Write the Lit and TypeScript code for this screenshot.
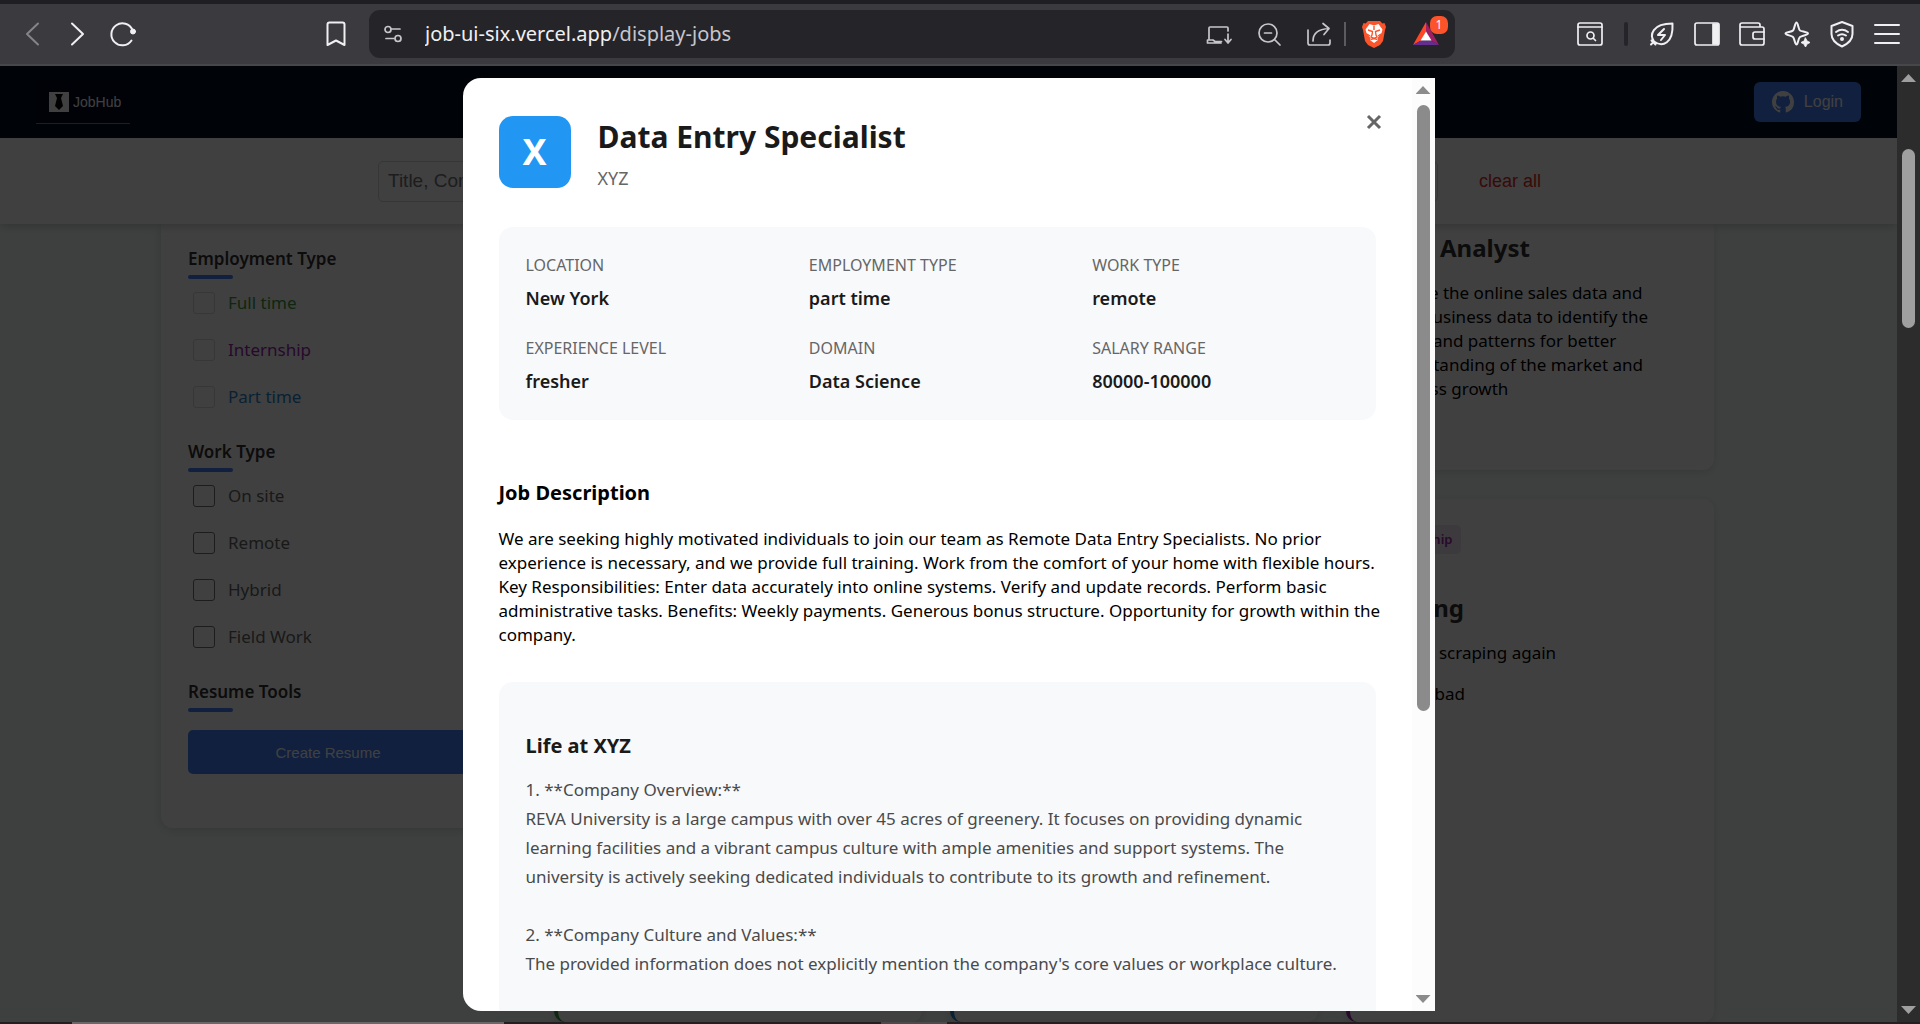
import { LitElement, html, css, svg } from "lit";
import { customElement, property } from "lit/decorators.js";

const stroke = (body: unknown, cls = "") => html`
  <svg class="icon ${cls}" viewBox="0 0 28 28" width="28" height="28" fill="none" stroke="currentColor"
    stroke-width="2" stroke-linecap="round" stroke-linejoin="round" aria-hidden="true">${body}</svg>`;

const icons = {
  back: stroke(svg`<path d="M19 3.500 8 14l11 10.500"/>`),
  forward: stroke(svg`<path d="M8 3.500 19 14 8 24.500"/>`),
  reload: stroke(svg`<path d="M23.500 10A11 11 0 1 0 22.500 20.500"/><circle cx="24" cy="11.500" r="2.500" fill="currentColor" stroke-width="1"/>`),
  bookmark: stroke(svg`<path d="M5.500 4.500a2 2 0 0 1 2-2h13a2 2 0 0 1 2 2v20.500l-8.500-4.500-8.500 4.500z"/>`),
  site: stroke(svg`<circle cx="9" cy="9.500" r="3"/><path d="M12 9h9M7 18.500h8"/><circle cx="19" cy="18.500" r="3"/>`, "thin"),
  install: stroke(svg`<path d="M4 19V8a1 1 0 0 1 1-1h17a1 1 0 0 1 1 1v3M2.500 20h5.500l2 1.500h6.500M2.500 20v3h13.500M23 14v8M20 19.500l3 3.500 3-3.500"/>`, "thin"),
  zoomOut: stroke(svg`<circle cx="13" cy="13" r="9"/><path d="M9.500 13h7M19.500 19.500l5.500 5.500"/>`, "thin"),
  share: stroke(svg`<path d="M3 10v13a2 2 0 0 0 2 2h18a2 2 0 0 0 2-2v-3M8 21c0-8 6-12 16-12.500M18 3.500l6 5-5 6"/>`, "thin"),
  find: stroke(svg`<rect x="2" y="3" width="24" height="22" rx="2"/><path d="M2 7h24M17.500 18.500l2 2"/><circle cx="14.500" cy="15.500" r="3.500"/>`, "thin"),
  leaf: stroke(svg`<path d="M3 24.500c1-1 2-2 3-3C1.500 15 4 3.500 24.500 3.500c1 20-10 24-18.500 18M3.500 20.500l4 4M16 9l-6 6h7l-4 5"/>`),
  panel: stroke(svg`<rect x="2" y="3" width="24" height="22" rx="2"/><path d="M20 4v20h5V4z" fill="currentColor"/>`, "thin"),
  wallet: stroke(svg`<path d="M22 7V5a2 2 0 0 0-2-2H4a2 2 0 0 0-2 2v18a2 2 0 0 0 2 2h20a2 2 0 0 0 2-2V9a2 2 0 0 0-2-2H3"/><path d="M26 12h-9a2 2 0 0 0-2 2v3a2 2 0 0 0 2 2h9"/>`, "thin"),
  sparkle: stroke(svg`<path d="M13.500 2.500c1.500 0 2 7 3.500 8s8 1.500 8 3-6 2-8 3.500-2 7.500-3.500 7.500-2-6-3.500-7.500-7.500-2-7.500-3.500 6-1.500 7.500-3 2-8 3.500-8z"/><path d="M22.500 18l1.500 3 3 1.500-3 1.500-1.500 3-1.500-3-3-1.500 3-1.500z" fill="currentColor" stroke-width="1"/>`),
  shield: stroke(svg`<path d="M14 2l10.500 4v8c0 6-5 10-10.500 12.500C8.500 24 3.500 20 3.500 14V6z"/><path d="M8 12c4-3 8-3 12 0M10 15.500c3-2 5-2 8 0"/><circle cx="14" cy="19" r="1" fill="currentColor"/>`),
  menu: stroke(svg`<path d="M2 5h24M2 14h24M2 23h24"/>`),
  close: stroke(svg`<path d="M8 8l12 12M20 8 8 20" stroke-width="3" stroke-linecap="butt"/>`),
};

const braveIcon = html`
  <svg viewBox="0 0 28 30" width="28" height="30" aria-hidden="true">
    <path fill="#fb542b" d="M8 2h12l2.500 2.500 2-.5L26 8l-1 3-2 11-3 4-6 3-6-3-3-4L3 11 2 8l1.500-4 2 .5z"/>
    <path fill="#fff" d="M14 6.500 18.500 5l4 5.500-1 3.500-4 5 .5 2-4 3-4-3 .5-2-4-5-1-3.500L9.500 5z"/>
    <path fill="none" stroke="#fb542b" stroke-width="1.400" d="M8 11l4.500 1.500L12 16l-1 2 3 1.500 3-1.500-1-2-.5-3.500L20 11M10.500 20.500 14 19.500l3.500 1M14 7v4M7 15l3 2M21 15l-3 2"/>
  </svg>`;

const tokenIcon = html`
  <svg viewBox="0 0 28 26" width="28" height="26" aria-hidden="true">
    <path fill="#ff4724" d="M14 1v10l-5 8.500-8 4.500z"/>
    <path fill="#9e1f63" d="M14 1v10l5 8.500 8 4.500z"/>
    <path fill="#662d91" d="M1 24l8-4.500h10l8 4.500z"/>
    <path fill="#fff" d="M14 10.500l5.500 9h-11z"/>
  </svg>`;

const githubIcon = html`
  <svg viewBox="0 0 16 16" width="22" height="22" fill="currentColor" aria-hidden="true">
    <path d="M8 0C3.580 0 0 3.580 0 8c0 3.540 2.290 6.530 5.470 7.590.4.070.55-.17.55-.38 0-.19-.01-.82-.01-1.490-2.010.37-2.530-.49-2.690-.94-.09-.23-.48-.94-.82-1.130-.28-.15-.68-.52-.01-.53.63-.01 1.080.58 1.230.82.72 1.210 1.870.87 2.330.66.07-.52.28-.87.51-1.070-1.780-.2-3.640-.89-3.640-3.950 0-.87.31-1.590.82-2.150-.08-.2-.36-1.020.08-2.120 0 0 .67-.21 2.200.82a7.600 7.600 0 0 1 4 0c1.530-1.040 2.200-.82 2.200-.82.44 1.100.16 1.920.08 2.120.51.56.82 1.270.82 2.150 0 3.070-1.870 3.750-3.650 3.950.29.25.54.73.54 1.480 0 1.070-.01 1.930-.01 2.200 0 .21.15.46.55.38A8.010 8.010 0 0 0 16 8c0-4.420-3.580-8-8-8z"/>
  </svg>`;

const tieIcon = html`
  <svg viewBox="0 0 20 20" width="20" height="20" aria-hidden="true">
    <rect width="20" height="20" fill="#fff"/>
    <path d="M6 2h8l-2 4 2 8-4 4-4-4 2-8z" fill="#000"/>
  </svg>`;

const reset = css`
  * { box-sizing: border-box; margin: 0; padding: 0; }
  button { border: 0; background: none; color: inherit; font: inherit; cursor: pointer; }
  a { color: inherit; text-decoration: none; }
  .icon { display: block; flex: none; }
  .icon.thin { stroke-width: 1.700; }
`;

@customElement("browser-bar")
class BrowserBar extends LitElement {
  static styles = [reset, css`
    :host { display: block; font-family: "Noto Sans", "Open Sans", sans-serif; }
    .bar {
      display: flex; align-items: center; height: 66px; padding: 0 11px 0 10px;
      background: #3b3a3f; color: #f0f0f3; border-top: 4px solid #1f1e23; border-bottom: 2px solid #47474b;
    }
    .tool { display: flex; align-items: center; justify-content: center; flex: none; width: 45px; height: 44px; }
    .off { color: #858489; }
    .mark { margin-left: 168px; margin-right: 11px; }
    .address {
      display: flex; align-items: center; flex: 0 1 1086px; min-width: 0; height: 48px;
      padding: 0 3px 0 10px; border-radius: 11px; background: #252429; color: #c6c6cb;
    }
    .address .tool { width: 50px; }
    .address .site { width: 28px; }
    .address .brand { width: 52px; }
    .url {
      flex: 1; min-width: 0; height: 32px; margin-left: 18px; overflow: hidden; white-space: nowrap;
      font-size: 20px; line-height: 32px;
    }
    .host { color: #f0f0f3; }
    .rule { flex: none; width: 2px; height: 24px; margin-right: 2px; background: #5c5b60; }
    .badge-wrap { position: relative; }
    .count {
      position: absolute; top: 4px; right: 4px; min-width: 18px; height: 18px; border-radius: 7px;
      background: #fb542b; color: #fff; font-size: 12px; line-height: 18px; text-align: center;
    }
    .end { display: flex; align-items: center; margin-left: auto; }
    .gap { display: flex; justify-content: center; width: 27px; }
    .gap i { width: 4px; height: 24px; border-radius: 2px; background: #25242a; }
  `];

  render() {
    const tool = (label: string, icon: unknown, cls = "") =>
      html`<button class="tool ${cls}" aria-label=${label}>${icon}</button>`;
    return html`
      <div class="bar">
        ${tool("Back", icons.back, "off")}${tool("Forward", icons.forward)}${tool("Reload", icons.reload)}
        ${tool("Bookmark", icons.bookmark, "mark")}
        <div class="address">
          ${tool("Site settings", icons.site, "site")}
          <p class="url"><span class="host">job-ui-six.vercel.app</span>/display-jobs</p>
          ${tool("Install", icons.install)}${tool("Zoom", icons.zoomOut)}${tool("Share", icons.share)}
          <span class="rule"></span>
          ${tool("Shields", braveIcon, "brand")}
          <button class="tool brand badge-wrap" aria-label="Rewards">${tokenIcon}<span class="count">1</span></button>
        </div>
        <div class="end">
          ${tool("Find", icons.find)}<span class="gap"><i></i></span>
          ${tool("Energy saver", icons.leaf)}${tool("Side panel", icons.panel)}${tool("Wallet", icons.wallet)}
          ${tool("Assistant", icons.sparkle)}${tool("VPN", icons.shield)}${tool("Menu", icons.menu)}
        </div>
      </div>`;
  }
}

@customElement("scroll-track")
class ScrollTrack extends LitElement {
  @property({ type: Number }) before = 0;
  @property({ type: Number }) thumb = 50;
  @property({ type: Number }) after = 50;
  static styles = css`
    :host { display: flex; flex: none; width: 23px; }
    .track { display: flex; flex-direction: column; align-items: center; flex: 1; padding: 8px 0; }
    .arrow { flex: none; width: 15px; height: 8px; background: currentColor; clip-path: polygon(50% 0, 100% 100%, 0 100%); }
    .down { clip-path: polygon(0 0, 100% 0, 50% 100%); }
    .lane { display: flex; flex-direction: column; flex: 1; width: 13px; padding: 11px 0; }
    .thumb { border-radius: 7px; background: currentColor; }
  `;
  render() {
    return html`
      <div class="track">
        <span class="arrow"></span>
        <span class="lane">
          <span style="flex:${this.before}"></span>
          <span class="thumb" style="flex:${this.thumb}"></span>
          <span style="flex:${this.after}"></span>
        </span>
        <span class="arrow down"></span>
      </div>`;
  }
}

const employment = [["Full time", "green"], ["Internship", "purple"], ["Part time", "blue"]];
const workTypes = ["On site", "Remote", "Hybrid", "Field Work"];

@customElement("job-board")
class JobBoard extends LitElement {
  static styles = [reset, css`
    :host { display: flex; flex-direction: column; min-height: 0; overflow: hidden; background: #f5fffa; font-family: "Noto Sans", "Open Sans", sans-serif; font-size: 17px; line-height: 24px; }
    .nav { display: flex; align-items: center; justify-content: space-between; flex: none; height: 72px; padding: 0 36px; background: #001020; color: #fff; font-family: "Liberation Sans", Arial, sans-serif; }
    .logo { display: flex; align-items: center; gap: 4px; height: 44px; padding: 0 9px 0 13px; background: #000820; border-bottom: 1px solid #777; font-size: 14px; }
    .login { display: flex; align-items: center; gap: 10px; height: 40px; padding: 0 18px; border-radius: 6px; background: #4480fc; font-size: 16px; }
    .filters { display: flex; align-items: center; justify-content: center; flex: none; z-index: 1; height: 86px; padding-left: 22px; background: #fff; box-shadow: 0 2px 9px rgba(0, 0, 0, .2); font-family: "Liberation Sans", Arial, sans-serif; }
    .field { width: 520px; height: 41px; padding: 0 9px; border: 1px solid #d5d5d5; border-radius: 5px; font: 19px "Liberation Sans", Arial, sans-serif; }
    .field::placeholder { color: #757575; opacity: 1; }
    .field + .field { margin-left: 20px; }
    .clear { margin-left: 41px; color: #e02b20; font-size: 18px; }
    .main { display: flex; align-items: flex-start; flex: 1; min-height: 0; padding: 0 183px 0 161px; }
    .side { flex: none; width: 334px; padding: 23px 27px 54px; border-radius: 0 0 12px 12px; background: #fff; box-shadow: 0 2px 11px rgba(0, 0, 0, .15); }
    .head { font-size: 17px; font-weight: 600; line-height: 24px; color: #333; }
    .head::after { content: ""; display: block; width: 45px; height: 4px; margin-top: 4px; border-radius: 2px; background: #4480fc; }
    .group { margin-bottom: 20px; }
    .opt { display: flex; align-items: center; gap: 13px; height: 47px; padding-left: 5px; color: #666; }
    .opt input { appearance: none; flex: none; width: 22px; height: 22px; border: 1px solid #767676; border-radius: 3px; background: #fff; }
    .opt.green input, .opt.purple input, .opt.blue input { border-color: #dadada; }
    .green { color: #3c9a40; } .purple { color: #9c27b0; } .blue { color: #2a84d0; }
    .create { display: block; width: 100%; height: 44px; margin-top: 18px; border-radius: 5px; background: #4480fc; color: #fff; font: 15px "Liberation Sans", Arial, sans-serif; }
    .cards { display: grid; grid-template-columns: repeat(3, 1fr); grid-template-rows: 246px 523px; gap: 29px 28px; flex: 1; margin-left: 59px; }
    .card { padding: 26px 27px 0; border-left: 4px solid; border-radius: 11px; background: #fff; box-shadow: 0 2px 9px rgba(0, 0, 0, .12); }
    .top { padding-top: 6px; border-radius: 0 0 11px 11px; }
    .title { font-size: 24px; line-height: 36px; color: #333; }
    .text { margin-top: 15px; color: #000; }
    .place { margin-top: 17px; color: #000; }
    .tag { display: inline-block; margin-bottom: 36px; padding: 4px 9px; border-radius: 5px; background: #f3e5f5; color: #9c27b0; font-size: 13px; font-weight: 600; line-height: 21px; vertical-align: top; }
  `];

  render() {
    return html`
      <header class="nav">
        <a class="logo" href="#">${tieIcon}<span>JobHub</span></a>
        <button class="login">${githubIcon}<span>Login</span></button>
      </header>
      <form class="filters">
        <input class="field" aria-label="Title or company" placeholder="Title, Company">
        <input class="field" aria-label="Location">
        <button class="clear" type="reset">clear all</button>
      </form>
      <div class="main">
        <aside class="side">
          <section class="group">
            <h3 class="head">Employment Type</h3>
            ${employment.map(([name, tone]) => html`<label class="opt ${tone}"><input type="checkbox">${name}</label>`)}
          </section>
          <section class="group">
            <h3 class="head">Work Type</h3>
            ${workTypes.map((name) => html`<label class="opt"><input type="checkbox">${name}</label>`)}
          </section>
          <h3 class="head">Resume Tools</h3>
          <button class="create">Create Resume</button>
        </aside>
        <div class="cards">
          <article class="card top green"></article>
          <article class="card top blue"></article>
          <article class="card top purple">
            <h2 class="title">Data Analyst</h2>
            <p class="text">Analyze the online sales data and<br>retail business data to identify the<br>trends and patterns for better<br>understanding of the market and<br>business growth</p>
          </article>
          <article class="card green"></article>
          <article class="card blue"></article>
          <article class="card purple">
            <span class="tag">Internship</span>
            <h2 class="title">Testing</h2>
            <p class="text">Testing scraping again</p>
            <p class="place">Hyderabad</p>
          </article>
        </div>
      </div>`;
  }
}

const facts = [
  ["LOCATION", "New York"], ["EMPLOYMENT TYPE", "part time"], ["WORK TYPE", "remote"],
  ["EXPERIENCE LEVEL", "fresher"], ["DOMAIN", "Data Science"], ["SALARY RANGE", "80000-100000"],
];

@customElement("job-dialog")
class JobDialog extends LitElement {
  static styles = [reset, css`
    :host { display: flex; flex: 0 1 972px; min-width: 0; overflow: hidden; border-radius: 18px 0 0 18px; background: #fff; font-family: "Noto Sans", "Open Sans", sans-serif; font-size: 17px; line-height: 24px; color: #000; }
    .body { flex: 1; min-width: 0; padding: 36px 36px 0; overflow: hidden; }
    .header { display: flex; align-items: center; gap: 27px; }
    .avatar { display: flex; align-items: center; justify-content: center; flex: none; width: 72px; height: 72px; border-radius: 14px; background: #2196f3; color: #fff; font-size: 36px; font-weight: 700; }
    .title { font-size: 30px; font-weight: 700; line-height: 46px; color: #1a1a1a; }
    .company { margin-top: 6px; font-size: 18px; color: #666; }
    .close { align-self: flex-start; margin: -6px -12px 0 auto; color: #666; }
    .facts { display: grid; grid-template-columns: repeat(3, 1fr); gap: 27px; margin-top: 37px; padding: 27px; border-radius: 14px; background: #f8f9fb; }
    .label { font-size: 16px; line-height: 22px; color: #666; }
    .value { margin-top: 10px; font-size: 18px; font-weight: 600; line-height: 24px; color: #1a1a1a; }
    .section { margin-top: 59px; font-size: 20px; line-height: 28px; }
    .text { margin: 20px -12px 0 0; }
    .life { margin-top: 35px; padding: 50px 27px; border-radius: 14px; background: #f8f9fb; }
    .life-title { font-size: 20px; line-height: 28px; color: #1a1a1a; }
    .life-text { margin-top: 15px; line-height: 29px; color: #4a4a4a; white-space: pre-line; }
    .track { background: #fcfcfc; color: #8b8b8b; }
  `];

  render() {
    const life = [
      "1. **Company Overview:**",
      "REVA University is a large campus with over 45 acres of greenery. It focuses on providing dynamic learning facilities and a vibrant campus culture with ample amenities and support systems. The university is actively seeking dedicated individuals to contribute to its growth and refinement.",
      "",
      "2. **Company Culture and Values:**",
      "The provided information does not explicitly mention the company's core values or workplace culture.",
    ].join("\n");
    return html`
      <div class="body">
        <header class="header">
          <span class="avatar">X</span>
          <div>
            <h1 class="title">Data Entry Specialist</h1>
            <p class="company">XYZ</p>
          </div>
          <button class="close" aria-label="Close">${icons.close}</button>
        </header>
        <dl class="facts">
          ${facts.map(([label, value]) => html`<div><dt class="label">${label}</dt><dd class="value">${value}</dd></div>`)}
        </dl>
        <h2 class="section">Job Description</h2>
        <p class="text">We are seeking highly motivated individuals to join our team as Remote Data Entry Specialists. No prior experience is necessary, and we provide full training. Work from the comfort of your home with flexible hours. Key Responsibilities: Enter data accurately into online systems. Verify and update records. Perform basic administrative tasks. Benefits: Weekly payments. Generous bonus structure. Opportunity for growth within the company.</p>
        <section class="life">
          <h2 class="life-title">Life at XYZ</h2>
          <p class="life-text">${life}</p>
        </section>
      </div>
      <scroll-track class="track" .before=${0} .thumb=${606} .after=${273}></scroll-track>`;
  }
}

@customElement("app-root")
class AppRoot extends LitElement {
  static styles = css`
    :host { display: flex; flex-direction: column; height: 100vh; overflow: hidden; background: #231f20; }
    .view { display: flex; flex: 1; min-height: 0; }
    .stage { display: grid; grid-template: minmax(0, 1fr) / minmax(0, 1fr); flex: 1; min-width: 0; }
    .page, .shade { grid-area: 1 / 1; }
    .shade { z-index: 2; display: flex; justify-content: center; min-height: 0; padding: 12px 12px 11px; background: rgba(0, 0, 0, .75); }
    .track { background: #2c2c2c; color: #9f9f9f; }
    .edge { flex: none; height: 2px; background: linear-gradient(90deg, #231f20 72px, #6a6768 72px 504px, #231f20 504px 881px, #4c4a4b 881px 947px, #231f20 947px); }
  `;

  render() {
    return html`
      <browser-bar></browser-bar>
      <div class="view">
        <div class="stage">
          <job-board class="page"></job-board>
          <div class="shade"><job-dialog role="dialog" aria-label="Data Entry Specialist"></job-dialog></div>
        </div>
        <scroll-track class="track" .before=${56} .thumb=${179} .after=${667}></scroll-track>
      </div>
      <div class="edge"></div>`;
  }
}
